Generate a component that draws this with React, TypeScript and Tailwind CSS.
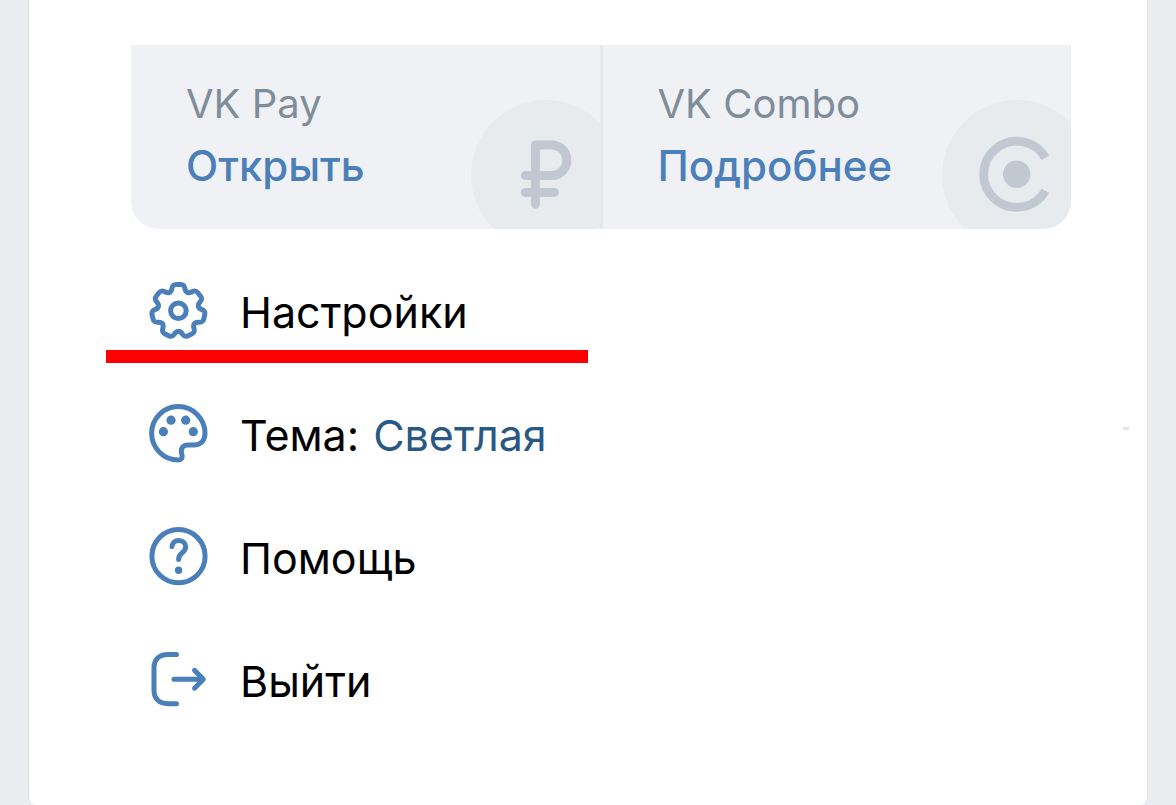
import type { ReactNode } from 'react';

const TEETH = 7;

function gearPath(cx: number, cy: number) {
  // one tooth pointing up, repeated around the centre
  const tooth = [
    [-8.9, -18.4],
    [-4.6, -20.5], [-8.6, -26.5], [-2, -26.5],
    [2, -26.5],
    [8.6, -26.5], [4.6, -20.5], [8.9, -18.4],
  ];
  let d = '';
  for (let i = 0; i < TEETH; i++) {
    const a = (i * 2 * Math.PI) / TEETH;
    const p = tooth.map(([x, y]) => {
      const px = cx + x * Math.cos(a) - y * Math.sin(a);
      const py = cy + x * Math.sin(a) + y * Math.cos(a);
      return `${px.toFixed(2)} ${py.toFixed(2)}`;
    });
    d += `${i === 0 ? 'M' : 'L'}${p[0]} C${p[1]} ${p[2]} ${p[3]} L${p[4]} C${p[5]} ${p[6]} ${p[7]} `;
  }
  return d + 'Z';
}

function MenuIcon({ children }: { children: ReactNode }) {
  return (
    <svg
      viewBox="0 0 60 60"
      className="size-[60px] shrink-0 text-[#4a7fba]"
      fill="none"
      stroke="currentColor"
      strokeWidth="5"
      strokeLinecap="round"
      strokeLinejoin="round"
      aria-hidden="true"
    >
      {children}
    </svg>
  );
}

function GearIcon() {
  return (
    <MenuIcon>
      <path d={gearPath(30.4, 29.9)} />
      <circle cx="30.4" cy="29.7" r="7.8" />
    </MenuIcon>
  );
}

function PaletteIcon() {
  return (
    <MenuIcon>
      <path d="M30.4 56A26.7 26.7 0 1 1 57 29.3C57 37 52.5 41 46 41H40C35 41 32.8 44 33.4 48.5L34 51C34.6 54 33.4 56 30.4 56Z" />
      <g fill="currentColor" stroke="none">
        <circle cx="23" cy="16.2" r="4.6" />
        <circle cx="37.7" cy="16.2" r="4.6" />
        <circle cx="15.4" cy="27.7" r="4.6" />
        <circle cx="45.3" cy="27.7" r="4.6" />
      </g>
    </MenuIcon>
  );
}

function HelpIcon() {
  return (
    <MenuIcon>
      <circle cx="30.5" cy="29.2" r="26.6" />
      <path d="M24 19.6C24.2 15.8 27 13.4 30.7 13.4C34.8 13.4 37.7 16.2 37.7 19.8C37.7 22.6 36.2 24.2 34 26C31.7 27.8 30.6 29 30.6 32.5" />
      <circle cx="30.6" cy="43.2" r="3.7" fill="currentColor" stroke="none" />
    </MenuIcon>
  );
}

function LogoutIcon() {
  return (
    <MenuIcon>
      <path d="M28.5 4.4H20C11 4.4 6 9.4 6 18V40C6 48.6 11 53.7 20 53.7H28.5" />
      <path d="M26 29.2H54.6" />
      <path d="M46.5 20.3L55.3 29.2L46.5 38.2" />
    </MenuIcon>
  );
}

function RubleIcon() {
  return (
    <svg viewBox="0 0 150 150" className="size-[150px]" fill="none" stroke="#c2c8d1" strokeWidth="9" strokeLinecap="round" strokeLinejoin="round" aria-hidden="true">
      <path d="M64.4 104.2V45H81.8A15.3 15.3 0 0 1 81.8 75.5H54.4" />
      <path d="M54.4 92.4H83.4" />
    </svg>
  );
}

function ComboIcon() {
  return (
    <svg viewBox="0 0 150 150" className="size-[150px]" fill="none" stroke="#c2c8d1" strokeWidth="8.7" aria-hidden="true">
      <path d="M103.3 57.8A33 33 0 1 0 103.3 90.8" />
      <circle cx="74.7" cy="74.3" r="13.7" fill="#c2c8d1" stroke="none" />
    </svg>
  );
}

function ServiceCard({ title, action, icon }: { title: string; action: string; icon: ReactNode }) {
  return (
    <a href="#" className="relative flex h-[184px] flex-1 flex-col overflow-hidden pt-[28px] pl-[55px] leading-[62px]">
      <span className="absolute -right-[21px] -bottom-[21px] rounded-full bg-[#e7ebee]">{icon}</span>
      <span className="relative text-[40px] text-[#7f8c9a]">{title}</span>
      <span className="relative text-[42px] font-medium text-[#4a7fba]">{action}</span>
    </a>
  );
}

function MenuItem({ icon, label, value, marked }: { icon: ReactNode; label: string; value?: string; marked?: boolean }) {
  return (
    <li className="relative">
      <a href="#" className="flex h-[60px] items-center text-[43px] leading-[60px] text-black">
        {icon}
        <span className="ml-8 pt-[2px]">{label}</span>
        {value && <span className="ml-[14px] pt-[2px] text-[#2a5885]">{value}</span>}
      </a>
      {marked && <span className="absolute top-[69px] -left-[42px] h-[13px] w-[482px] bg-[#ff0000]" />}
    </li>
  );
}

export default function App() {
  return (
    <div className="min-h-screen bg-[#ebecf0] px-7 font-['Inter',sans-serif]">
      <main className="relative min-h-screen rounded-b-lg border-x border-[#dfe1e6] bg-white pt-[45px] pr-[76px] pb-[95px] pl-[102px]">
        <div className="flex overflow-hidden rounded-b-[28px] bg-[#f0f1f5]">
          <ServiceCard title="VK Pay" action="Открыть" icon={<RubleIcon />} />
          <span className="w-[3px] bg-[#e5e7ea]" />
          <ServiceCard title="VK Combo" action="Подробнее" icon={<ComboIcon />} />
        </div>

        <ul className="mt-[52px] ml-[17px] flex flex-col gap-[63px]">
          <MenuItem icon={<GearIcon />} label="Настройки" marked />
          <MenuItem icon={<PaletteIcon />} label="Тема:" value="Светлая" />
          <MenuItem icon={<HelpIcon />} label="Помощь" />
          <MenuItem icon={<LogoutIcon />} label="Выйти" />
        </ul>

        <span className="absolute top-[427px] right-[18px] h-[3px] w-[6px] bg-[#e4e5ea]" />
      </main>
    </div>
  );
}
